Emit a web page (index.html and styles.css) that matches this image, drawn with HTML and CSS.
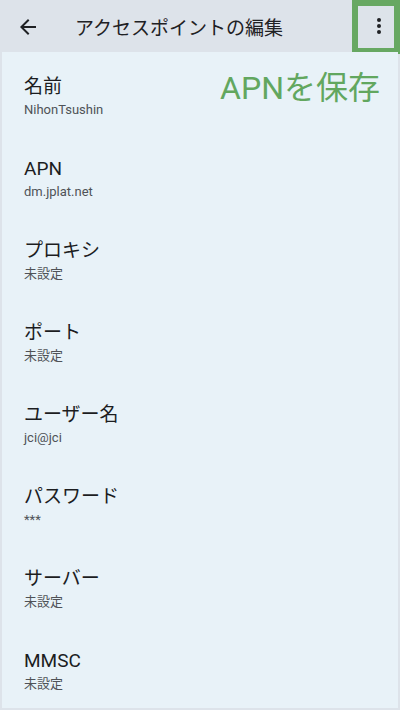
FILE: index.html
```html
<!DOCTYPE html>
<html lang="ja">
<head>
  <meta charset="UTF-8" />
  <meta name="viewport" content="width=device-width, initial-scale=1.0"/>
  <title>アクセスポイントの編集</title>
  <link rel="stylesheet" href="styles.css">
</head>
<body>
  <header class="topbar">
    <button class="icon-btn back" aria-label="戻る">
      <svg viewBox="0 0 24 24" width="24" height="24"><path d="M20 11H7.83l5.59-5.59L12 4l-8 8 8 8 1.41-1.41L7.83 13H20v-2z" fill="#1f2124"/></svg>
    </button>
    <h1 class="title">アクセスポイントの編集</h1>
    <button class="icon-btn menu" aria-label="その他">
      <svg viewBox="0 0 24 24" width="24" height="24"><circle cx="12" cy="6" r="2" fill="#1f2124"/><circle cx="12" cy="12" r="2" fill="#1f2124"/><circle cx="12" cy="18" r="2" fill="#1f2124"/></svg>
    </button>
    <div class="highlight"></div>
  </header>

  <main class="panel">
    <div class="hint">APNを保存</div>

    <div class="item">
      <div class="label">名前</div>
      <div class="value">NihonTsushin</div>
    </div>
    <div class="item">
      <div class="label">APN</div>
      <div class="value">dm.jplat.net</div>
    </div>
    <div class="item">
      <div class="label">プロキシ</div>
      <div class="value">未設定</div>
    </div>
    <div class="item">
      <div class="label">ポート</div>
      <div class="value">未設定</div>
    </div>
    <div class="item">
      <div class="label">ユーザー名</div>
      <div class="value">jci@jci</div>
    </div>
    <div class="item">
      <div class="label">パスワード</div>
      <div class="value">***</div>
    </div>
    <div class="item">
      <div class="label">サーバー</div>
      <div class="value">未設定</div>
    </div>
    <div class="item">
      <div class="label">MMSC</div>
      <div class="value">未設定</div>
    </div>
  </main>
</body>
</html>
```

FILE: styles.css
```css
body {
  margin: 0;
  height: 710px;
  overflow: hidden;
  background: #dde3ea;
  font-family: Roboto, "Noto Sans CJK JP", sans-serif;
  color: #1c1d1f;
}

.topbar {
  position: relative;
  height: 52px;
  display: flex;
  align-items: center;
  padding-left: 16px;
}

.icon-btn {
  background: none;
  border: none;
  padding: 0;
  width: 24px;
  height: 24px;
  display: flex;
}

.back {
  margin-top: 2px;
}

.title {
  margin: 0 0 0 35px;
  font-size: 19px;
  font-weight: 400;
  color: #1f2124;
}

.menu {
  margin-left: auto;
  margin-right: 9px;
}

.highlight {
  position: absolute;
  top: 0;
  right: 0;
  width: 36px;
  height: 42px;
  border: 6px solid #67a862;
}

.panel {
  position: relative;
  margin: 0 2px 2px;
  height: 656px;
  background: #e8f2f8;
}

.hint {
  position: absolute;
  top: 10px;
  right: 18px;
  font-size: 32px;
  color: #62a75f;
}

.item {
  height: 82px;
  box-sizing: border-box;
  padding: 22px 22px 0;
}

.label {
  font-size: 19px;
  line-height: 26px;
}

.value {
  font-size: 13px;
  line-height: 20px;
  color: #4f5257;
}
```
